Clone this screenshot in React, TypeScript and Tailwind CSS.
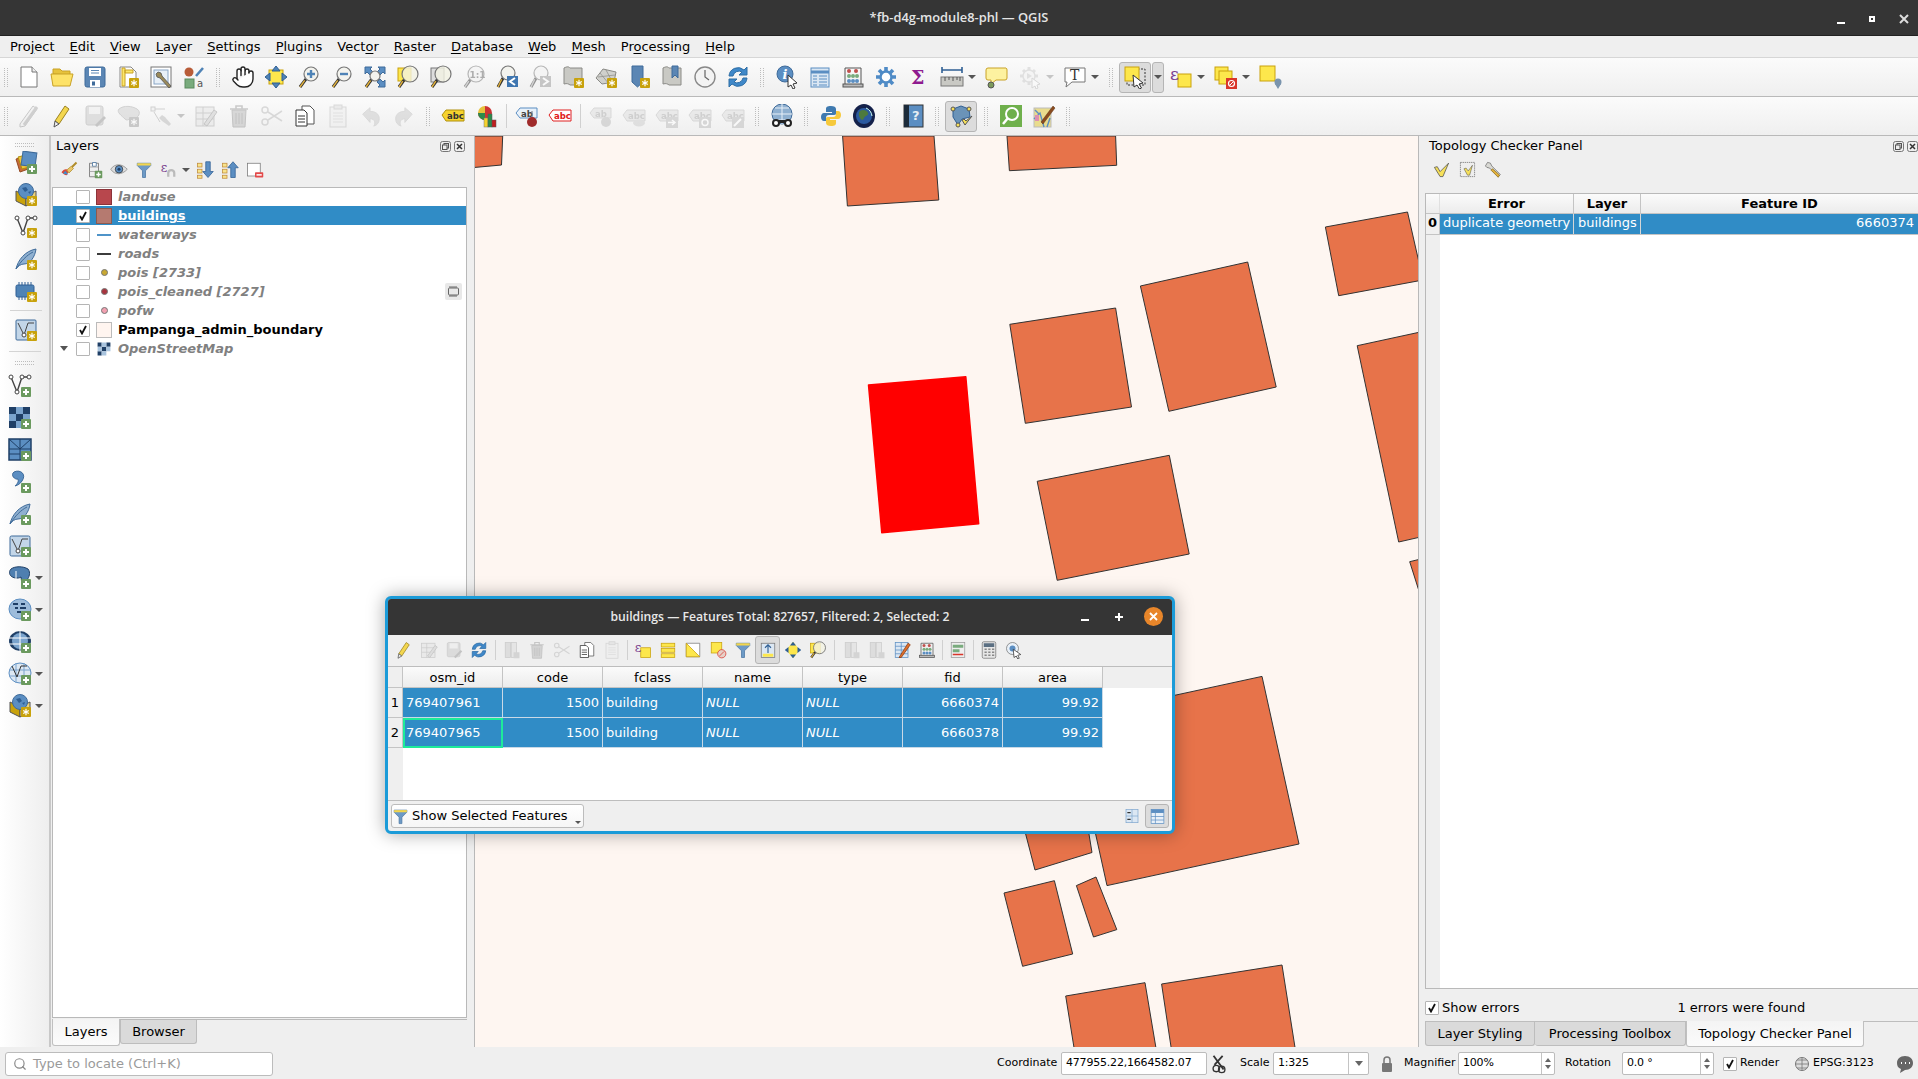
import type { ReactNode } from "react";
import { Hand, Search } from "lucide-react";

const Plus = () => (
  <g>
    <rect x="13" y="13" width="10" height="10" rx="1" fill="#6b9a5f" />
    <path d="M18 15v6M15 18h6" stroke="#fff" strokeWidth="2" />
  </g>
);
const Star = () => (
  <g>
    <rect x="13" y="13" width="10" height="10" rx="1" fill="#c8a20c" />
    <path d="M18 14.8v6.4M15.2 16.4l5.6 3.2M15.2 19.6l5.6-3.2" stroke="#fff" strokeWidth="1.2" />
  </g>
);
const Mag = ({ cx = 14, cy = 9, r = 7, fill = "#f3f3ee" }: { cx?: number; cy?: number; r?: number; fill?: string }) => (
  <g>
    <path d={`M${cx - r * 0.7} ${cy + r * 0.7}L3 22`} stroke="#333" strokeWidth="3" />
    <path d={`M${cx - r * 0.9} ${cy + r * 0.9}L3 22`} stroke="#e3b23c" strokeWidth="1.4" />
    <circle cx={cx} cy={cy} r={r} fill={fill} stroke="#777" strokeWidth="1.2" />
  </g>
);
const Page = ({ fill = "#fff", stroke = "#777" }: { fill?: string; stroke?: string }) => (
  <path d="M4 2h11l5 5v15H4z" fill={fill} stroke={stroke} />
);
const Funnel = () => (
  <g>
    <path d="M3 3h18v3l-7 7v9h-4v-9L3 6z" fill="#6d9ac6" stroke="#4a76a3" />
    <rect x="3" y="3" width="18" height="3" fill="#f3d64e" />
  </g>
);
const Sq = ({ x, y, w = 14 }: { x: number; y: number; w?: number }) => (
  <rect x={x} y={y} width={w} height={w} fill="#fde74c" stroke="#c9a20c" />
);
const Abc = ({ fill, stroke, color }: { fill: string; stroke: string; color: string }) => (
  <g>
    <path d="M1 11l4-5h18v11H5z" fill={fill} stroke={stroke} />
    <text x="6" y="15" fontSize="8.5" fontWeight="700" fontFamily="DejaVu Sans" fill={color}>
      abc
    </text>
  </g>
);
const Scroll = () => <path d="M3 3c4-2 5-1 6 0h12v17H9c-1-1-3-2-6-1z" fill="#c9c9c4" stroke="#8a8a86" />;

const icons: Record<string, ReactNode> = {
  new: (<><Page /><path d="M15 2v5h5" fill="#eee" stroke="#777" /></>),
  open: (<><path d="M3 9V4h7l2 2h8v4z" fill="#e6c23c" stroke="#c9a227" /><path d="M1 9h22l-3 12H3z" fill="#fde268" stroke="#c9a227" /></>),
  save: (<><rect x="2" y="2" width="20" height="20" rx="2" fill="#5b86b4" stroke="#3f6b9a" /><path d="M6 3h12v8H6z" fill="#fff" /><path d="M8 5.5h8M8 8h8" stroke="#5b86b4" /><rect x="7" y="15" width="10" height="7" fill="#fff" /><rect x="9" y="16.5" width="3" height="4" fill="#3f6b9a" /></>),
  layoutNew: (<><Page stroke="#888" /><path d="M6 3h3v18H6zM9 5h8v3H9z" fill="#fce76c" stroke="#c9a227" /><Star /></>),
  layouts: (<><rect x="2" y="2" width="20" height="20" fill="#fff" stroke="#777" /><rect x="5" y="5" width="14" height="14" fill="#e8f0f8" stroke="#89a6c6" /><path d="M9 7l3 1 1 3 9 10-2 2-9-10-3-1-1-3z" fill="#9a8a5a" stroke="#555" strokeWidth=".8" /></>),
  styles: (<><circle cx="7" cy="7" r="4.5" fill="#b85c38" /><path d="M14 11l7-8" stroke="#4f83b6" strokeWidth="2.5" /><rect x="3" y="14" width="9" height="9" fill="#79ab7d" stroke="#5a8a5e" /><text x="15" y="22" fontSize="10" fontFamily="DejaVu Sans" fill="#555">a</text></>),
  panSel: (<><rect x="5" y="5" width="14" height="14" fill="#fde74c" stroke="#c9a20c" /><path d="M12 1l4 5h-8zM12 23l4-5H8zM1 12l5-4v8zM23 12l-5-4v8z" fill="#4f83b6" stroke="#2f5f94" /></>),
  zoomIn: (<><Mag /><path d="M14 5v8M10 9h8" stroke="#4f83b6" strokeWidth="2.4" /></>),
  zoomOut: (<><Mag /><path d="M10 9h8" stroke="#4f83b6" strokeWidth="2.4" /></>),
  zoomFull: (<><path d="M2 2h7L7 4l3 3-3 3-3-3-2 2zM22 2v7l-2-2-3 3-3-3 3-3-2-2zM22 22h-7l2-2-3-3 3-3 3 3 2-2z" fill="#5b8ec2" stroke="#3f6b9a" /><Mag cx={12} cy={11} r={5} /></>),
  zoomSel: (<><Sq x={2} y={3} w={13} /><Mag cx={14} cy={9} r={8} fill="#f3f3e4cc" /></>),
  zoomLayer: (<><rect x="2" y="3" width="13" height="14" fill="#ddd" stroke="#777" /><Mag cx={14} cy={9} r={8} fill="#f3f3e4cc" /></>),
  zoomNative: (<><Mag cx={14} cy={9} r={8} /><text x="7.5" y="13" fontSize="9" fontWeight="700" fontFamily="DejaVu Sans" fill="#666">1:1</text></>),
  zoomLast: (<><Mag cx={13} cy={8} r={7} /><rect x="12" y="11" width="11" height="11" fill="#3f76b0" /><path d="M20 13l-5 3.5 5 3.5" stroke="#fff" strokeWidth="2" fill="none" /></>),
  zoomNext: (<><Mag cx={13} cy={8} r={7} /><rect x="12" y="11" width="11" height="11" fill="#999" /><path d="M15 13l5 3.5-5 3.5" stroke="#fff" strokeWidth="2" fill="none" /></>),
  newView: (<><Scroll /><Star /></>),
  new3d: (<><path d="M2 13l7-9 13 3-2 10-12 2z" fill="#d0d0cc" stroke="#8a8a86" /><path d="M6 8l9 11M12 5l7 13M4 12l17-2" stroke="#8a8a86" strokeWidth=".7" /><Star /></>),
  bookNew: (<><path d="M5 1h11v16l-5.500 5L5 17z" fill="#5b86b4" stroke="#3f6b9a" /><Star /></>),
  books: (<><Scroll /><path d="M12 1h6v12l-3-3-3 3z" fill="#5b86b4" stroke="#3f6b9a" /></>),
  clock: (<><circle cx="12" cy="12" r="10" fill="#f3f3f3" stroke="#888" strokeWidth="1.4" /><path d="M12 5v7l4 3" stroke="#666" strokeWidth="1.2" fill="none" /></>),
  refresh: (<><path d="M3 11a9 9 0 0 1 15-6l3-3v8h-8l3-3a6 6 0 0 0-9 4z" fill="#3f88c9" stroke="#2f6ea5" /><path d="M21 13a9 9 0 0 1-15 6l-3 3v-8h8l-3 3a6 6 0 0 0 9-4z" fill="#3f88c9" stroke="#2f6ea5" /></>),
  identify: (<><circle cx="10" cy="9" r="8" fill="#5b8ec2" stroke="#3f6b9a" /><text x="7.500" y="14" fontSize="13" fontWeight="700" fontStyle="italic" fontFamily="DejaVu Serif" fill="#fff">i</text><path d="M13 10l9 8-4 1 2 4-2 1-2-4-3 2z" fill="#fff" stroke="#333" /></>),
  table: (<><rect x="3" y="3" width="18" height="19" fill="#dbe7f3" stroke="#5b8ec2" /><path d="M3 7h18" stroke="#5b8ec2" strokeWidth="3" /><path d="M5 11h4M11 11h8M5 14h4M11 14h8M5 17h4M11 17h8M5 20h4M11 20h8" stroke="#5b8ec2" /></>),
  abacus: (<><path d="M4 3h16M4 20h16M4 3v17M20 3v17" stroke="#555" fill="none" /><rect x="2" y="19" width="20" height="3" fill="#bbb" stroke="#555" /><circle cx="8" cy="6" r="2" fill="#c0504d" /><circle cx="15" cy="6" r="2" fill="#c0504d" /><circle cx="8" cy="11" r="2" fill="#79ab7d" /><circle cx="12" cy="11" r="2" fill="#79ab7d" /><circle cx="16" cy="11" r="2" fill="#79ab7d" /><circle cx="8" cy="16" r="2" fill="#5b8ec2" /><circle cx="12" cy="16" r="2" fill="#5b8ec2" /><circle cx="16" cy="16" r="2" fill="#5b8ec2" /></>),
  gear: (<><path d="M12 2v4M12 18v4M2 12h4M18 12h4M5 5l3 3M16 16l3 3M19 5l-3 3M8 16l-3 3" stroke="#4f8bc6" strokeWidth="3.6" /><circle cx="12" cy="12" r="5.500" fill="#fff" stroke="#4f8bc6" strokeWidth="2.500" /></>),
  sigma: <text x="4" y="19" fontSize="19" fontWeight="700" fontFamily="DejaVu Serif" fill="#8e1a8e">Σ</text>,
  measure: (<><path d="M2 5h20M2 2v6M22 2v6" stroke="#2f5f94" strokeWidth="1.6" /><rect x="1" y="12" width="22" height="9" fill="#c9c9c4" stroke="#777" /><path d="M5 12v4M9 12v3M13 12v4M17 12v3M20 12v4" stroke="#555" /></>),
  note: (<><path d="M3 3h18a2 2 0 0 1 1 2v8a2 2 0 0 1-2 2h-9l-5 4v-4H3a2 2 0 0 1-2-2V5a2 2 0 0 1 2-2z" fill="#fdf2a0" stroke="#c9a227" /><circle cx="6" cy="20" r="3" fill="#7c9a5b" stroke="#555" /></>),
  gearCur: (<><path d="M11 2v4M11 16v4M2 11h4M16 11h4M5 5l3 3M14 14l3 3M17 5l-3 3M8 14l-3 3" stroke="#ccc" strokeWidth="3" /><circle cx="11" cy="11" r="6" fill="#f4f4f4" stroke="#ccc" strokeWidth="1.5" /><path d="M9 8l5 3-5 3z" fill="#ccc" /><path d="M14 13l8 6-3 1 1 3-2 1-1-3-3 2z" fill="#fff" stroke="#bbb" /></>),
  textNote: (<><path d="M2 3h20v14H9l-6 5 1-5H2z" fill="#fff" stroke="#777" /><text x="7" y="15" fontSize="14" fontFamily="DejaVu Serif" fill="#333">T</text></>),
  selectRect: (<><rect x="4" y="4" width="18" height="16" fill="none" stroke="#333" strokeDasharray="2 1.500" /><Sq x={2} y={2} w={14} /><path d="M10 10l10 8-4 1 2.500 4-2 1-2.500-4-3 2z" fill="#fff" stroke="#333" /></>),
  eps: (<><Sq x={9} y={9} w={13} /><text x="1" y="15" fontSize="17" fontFamily="DejaVu Serif" fill="#7a3f8e">ε</text></>),
  selAll: (<><Sq x={1} y={2} w={13} /><Sq x={5} y={6} w={13} /><rect x="12" y="13" width="11" height="11" fill="#d9362b" /><circle cx="17.500" cy="18.500" r="3" fill="none" stroke="#fff" strokeWidth="1.2" /><path d="M15.500 20.500l4-4" stroke="#fff" /></>),
  selLoc: (<><Sq x={1} y={1} w={15} /><circle cx="19" cy="17" r="3.500" fill="#7a94ad" /><path d="M16 19l3 5 3-5" fill="#7a94ad" /></>),
  editPen: (<><path d="M3 20L16 2l4 3L8 22l-5 1z" fill="#eee" stroke="#999" /><path d="M7 21L20 3" stroke="#aaa" strokeWidth="3" /></>),
  pencil: (<><path d="M5 17L15 2l4 3L9 20z" fill="#f3d64e" stroke="#9c8320" /><path d="M5 17l4 3-5 3z" fill="#eee" stroke="#555" /></>),
  saveEdit: (<><rect x="3" y="2" width="17" height="19" rx="2" fill="#c9c9c4" stroke="#aaa" /><rect x="6" y="3" width="11" height="7" fill="#eee" /><path d="M12 21l9-9 2 2-9 9z" fill="#999" /></>),
  addPoly: (<><path d="M3 5c5-4 13-3 18 0s1 10-3 9-6 4-9 1-9-7-6-10z" fill="#cfcfca" stroke="#aaa" /><Star /></>),
  vert: (<><rect x="2" y="3" width="4" height="4" fill="#eee" stroke="#aaa" /><path d="M6 5h10M5 8l6 10" stroke="#aaa" /><path d="M10 14l3 3 7 5 2-2-6-7-3-2z" fill="#bbb" /></>),
  editAttr: (<><rect x="2" y="3" width="18" height="19" fill="#e8e6d8" stroke="#aaa" /><path d="M2 9h18M2 15h18M9 3v19" stroke="#aaa" /><path d="M10 20l10-14 3 2-10 14z" fill="#ccc" stroke="#999" /></>),
  trash: (<><path d="M3 5h18M9 5V2h6v3" stroke="#b09a96" strokeWidth="1.600" fill="none" /><path d="M5 6h14l-1 17H6z" fill="#c9b5b1" stroke="#a58e8a" /><path d="M9 9v11M12 9v11M15 9v11" stroke="#a58e8a" /></>),
  cut: (<><circle cx="5" cy="6" r="3" fill="none" stroke="#bbb" strokeWidth="1.500" /><circle cx="5" cy="18" r="3" fill="none" stroke="#bbb" strokeWidth="1.500" /><path d="M8 8l14 9M8 16l14-9" stroke="#bbb" strokeWidth="1.500" /></>),
  copy: (<><path d="M9 2h8l4 4v14H9z" fill="#fff" stroke="#555" /><path d="M3 6h8l3 3v13H3z" fill="#fff" stroke="#333" /><path d="M5 12h7M5 15h7M5 18h7" stroke="#333" /></>),
  paste: (<><rect x="4" y="3" width="16" height="20" fill="#eee" stroke="#bbb" /><rect x="8" y="1" width="8" height="4" fill="#ddd" stroke="#bbb" /><path d="M7 9h10M7 12h10M7 15h10M7 18h10" stroke="#ccc" /></>),
  undo: <path d="M3 10l8-7v4c6 0 10 3 10 8 0 4-2 7-6 8 2-2 2-8-4-8v4z" fill="#c9c9c4" stroke="#bbb" transform="scale(.92) translate(1 1)" />,
  redo: <path d="M21 10l-8-7v4C7 7 3 10 3 15c0 4 2 7 6 8-2-2-2-8 4-8v4z" fill="#c9c9c4" stroke="#bbb" transform="scale(.92) translate(1 1)" />,
  abcY: <Abc fill="#f6d32d" stroke="#b0900c" color="#333" />,
  chart: (<><path d="M11 2a7 7 0 1 1-7 7z" fill="#c33" /><path d="M11 9L4 9a7 7 0 0 1 7-7z" fill="#e6c23c" /><path d="M4 9a7 7 0 0 0 7 7v-7z" fill="#2c8a4b" /><rect x="10" y="14" width="4" height="9" fill="#f6d32d" stroke="#777" strokeWidth=".5" /><rect x="14" y="10" width="4" height="13" fill="#2c8a4b" stroke="#555" strokeWidth=".5" /><rect x="18" y="16" width="4" height="7" fill="#c01f1f" stroke="#555" strokeWidth=".5" /></>),
  abcPin: (<><path d="M1 9l4-5h17v10H5z" fill="#e8f1fa" stroke="#5b8ec2" /><text x="6" y="13" fontSize="8.500" fontWeight="700" fontFamily="DejaVu Sans" fill="#444">ab</text><path d="M17 7v7" stroke="#777" /><circle cx="17" cy="18" r="5" fill="#a02b2b" /></>),
  abcR: <Abc fill="#fff" stroke="#e02020" color="#e02020" />,
  abcPinD: (<><path d="M1 9l4-5h17v10H5z" fill="#ddd" stroke="#bbb" /><text x="6" y="13" fontSize="8.500" fontWeight="700" fontFamily="DejaVu Sans" fill="#aaa">ab</text><circle cx="17" cy="18" r="5" fill="#bbb" /></>),
  abcEye: (<><Abc fill="#ddd" stroke="#bbb" color="#aaa" /><ellipse cx="17" cy="19" rx="6" ry="3.500" fill="#ccc" /></>),
  abcMove: (<><Abc fill="#ddd" stroke="#bbb" color="#aaa" /><rect x="11" y="13" width="12" height="11" fill="#bbb" /><path d="M13 18.500h6M17 16l3 2.500-3 2.500" stroke="#fff" fill="none" strokeWidth="1.500" /></>),
  abcRot: (<><Abc fill="#ddd" stroke="#bbb" color="#aaa" /><rect x="11" y="13" width="12" height="11" fill="#bbb" /><circle cx="17" cy="18.500" r="3" fill="none" stroke="#fff" strokeWidth="1.500" /></>),
  abcEdit: (<><Abc fill="#ddd" stroke="#bbb" color="#aaa" /><rect x="11" y="13" width="12" height="11" fill="#bbb" /><path d="M13 22l7-7" stroke="#fff" strokeWidth="2" /></>),
  metasearch: (<><circle cx="12" cy="10" r="10" fill="#8fb0d0" stroke="#3f6b9a" /><path d="M2 10h20M12 0v20M5 4h14M5 16h14" stroke="#e8f0f8" /><circle cx="6" cy="19" r="4" fill="#222" /><circle cx="18" cy="19" r="4" fill="#222" /><circle cx="6" cy="19" r="2" fill="#fff" /><circle cx="18" cy="19" r="2" fill="#fff" /><rect x="8" y="16" width="8" height="3" fill="#222" /></>),
  python: (<><path d="M12 2c-4 0-5 1-5 3v3h6v1H5c-2 0-3 2-3 4s1 4 3 4h2v-3c0-2 1-3 3-3h5c2 0 2-1 2-2V5c0-2-2-3-5-3z" fill="#3f7ab0" /><path d="M12 22c4 0 5-1 5-3v-3h-6v-1h8c2 0 3-2 3-4s-1-4-3-4h-2v3c0 2-1 3-3 3h-5c-2 0-2 1-2 2v4c0 2 2 3 5 3z" fill="#f6c93c" /></>),
  earth: (<><ellipse cx="12" cy="12" rx="11" ry="12" fill="#14214a" /><circle cx="12" cy="12" r="8" fill="#2b5aa0" /><path d="M8 7c3-2 7-1 8 2s-3 2-4 5-3 2-4 0-2-5 0-7z" fill="#4d7a3e" /><path d="M14 4a10 10 0 0 1 6 8" stroke="#cfe" strokeWidth="1" fill="none" /></>),
  help: (<><rect x="3" y="1" width="19" height="22" fill="#5b8ec2" stroke="#333" /><rect x="3" y="1" width="5" height="22" fill="#1c2b3a" /><text x="11" y="16" fontSize="13" fontWeight="700" fontFamily="DejaVu Sans" fill="#e8eef4">?</text></>),
  topo: (<><path d="M4 5l8-3 8 3 1 8-8 2-4 6-5-8z" fill="#6b93b8" stroke="#2f5f94" /><circle cx="4" cy="5" r="2" fill="#f6e05a" stroke="#555" /><circle cx="20" cy="5" r="2" fill="#f6e05a" stroke="#555" /><circle cx="9" cy="21" r="2" fill="#f6e05a" stroke="#555" /><path d="M13 16l3 5 7-9-6 5-2-2z" fill="#f6e05a" stroke="#555" /></>),
  quickSearch: (<><rect x="1" y="1" width="22" height="22" fill="#6fb04c" /><circle cx="13" cy="10" r="6" fill="none" stroke="#fff" strokeWidth="2" /><path d="M9 14l-5 6" stroke="#fff" strokeWidth="2.500" /></>),
  mapEdit: (<><rect x="2" y="4" width="17" height="19" fill="#e9dc8d" stroke="#bbb" /><path d="M2 15l6-6 4 14M3 6l4 4M15 23l3-9" stroke="#5b8ec2" strokeWidth="1.400" fill="none" /><rect x="3" y="11" width="4" height="6" fill="#dd8fb0" /><path d="M9 18L21 2l2 2-12 16z" fill="#8a4b1f" stroke="#5a3010" strokeWidth=".5" /></>),
  addLayers: (<><path d="M2 8l12-3 3 12L6 21z" fill="#c76b3a" stroke="#954a22" /><path d="M4 6l12-3 3 12L8 18z" fill="#f0c33c" stroke="#b0900c" /><rect x="8" y="1" width="14" height="14" fill="#5b8ec2" stroke="#3f6b9a" transform="rotate(8 15 8)" /><Plus /></>),
  box3d: (<><path d="M2 8l10 5v10L2 18z" fill="#c8a20c" stroke="#555" /><path d="M12 13l10-5v10l-10 5z" fill="#ecd27a" stroke="#555" /><circle cx="12" cy="8" r="7.500" fill="#5b8ec2" stroke="#3f6b9a" /><path d="M8 5l4-1 2 3-3 2zM14 9l3-1-1 3z" fill="#2f5f94" /><Star /></>),
  vLineS: (<><path d="M3 3l6 15 5-15h7" fill="none" stroke="#444" strokeWidth="1.400" /><circle cx="3" cy="3" r="2" fill="#fff" stroke="#444" /><circle cx="9" cy="18" r="2" fill="#fff" stroke="#444" /><circle cx="14" cy="3" r="2" fill="#fff" stroke="#444" /><circle cx="21" cy="3" r="2" fill="#fff" stroke="#444" /><Star /></>),
  featherS: (<><path d="M2 22c2-9 9-18 20-20-1 8-6 15-12 15-3 0-6 2-8 5z" fill="#8fb0d0" stroke="#3f6b9a" /><path d="M2 22C7 14 13 8 19 5" stroke="#3f6b9a" fill="none" /><Star /></>),
  featherP: (<><path d="M2 22c2-9 9-18 20-20-1 8-6 15-12 15-3 0-6 2-8 5z" fill="#8fb0d0" stroke="#3f6b9a" /><path d="M2 22C7 14 13 8 19 5" stroke="#3f6b9a" fill="none" /><Plus /></>),
  chip: (<><path d="M5 3v18M8 3v18M11 3v18M14 3v18M17 3v18" stroke="#2f5f94" /><rect x="2" y="6" width="18" height="12" rx="1.500" fill="#4f83b6" stroke="#2f5f94" /><Star /></>),
  virtS: (<><rect x="2" y="2" width="20" height="20" rx="1" fill="#c3d6e8" stroke="#3f6b9a" /><path d="M4 5l6 12 4-12 6 0" fill="none" stroke="#444" /><circle cx="10" cy="17" r="2" fill="#fff" stroke="#444" /><Star /></>),
  vAdd: (<><path d="M3 3l6 15 5-15h7" fill="none" stroke="#444" strokeWidth="1.400" /><circle cx="3" cy="3" r="2" fill="#fff" stroke="#444" /><circle cx="9" cy="18" r="2" fill="#fff" stroke="#444" /><circle cx="14" cy="3" r="2" fill="#fff" stroke="#444" /><circle cx="21" cy="3" r="2" fill="#fff" stroke="#444" /><Plus /></>),
  raster: (<><path d="M1 1h7v7H1zM15 1h7v7h-7zM8 8h7v7H8zM1 15h7v7H1z" fill="#1f3f66" /><path d="M8 1h7v7H8zM1 8h7v7H1zM15 8h7v7h-7zM8 15h7v7H8z" fill="#7aa3cc" /><Plus /></>),
  mesh: (<><rect x="1" y="1" width="22" height="21" fill="#5b8ec2" stroke="#1f3f66" strokeWidth="1.500" /><path d="M1 11h22M12 1v21M1 1l11 10M23 1L12 11M1 16h11" stroke="#1f3f66" /><Plus /></>),
  comma: (<><path d="M6 2c6-3 13 2 8 9-2 3-4 4-7 5 2-2 4-4 3-7-3 1-8-4-4-7z" fill="#5b8ec2" stroke="#3f6b9a" /><Plus /></>),
  virtAdd: (<><rect x="2" y="2" width="20" height="20" rx="1.500" fill="#c3d6e8" stroke="#3f6b9a" /><path d="M4 5l6 12 4-12 6 0" fill="none" stroke="#444" /><circle cx="10" cy="17" r="2" fill="#fff" stroke="#444" /><Plus /></>),
  pg: (<><path d="M3 3c4-3 12-3 17 0 3 4 1 8-1 11-1 3-3 5-5 5l-1-8c-3 2-8 1-10-1S1 5 3 3z" fill="#4f7fb0" stroke="#1f3f66" /><path d="M8 5v8" stroke="#fff" /><Plus /></>),
  wms: (<><ellipse cx="12" cy="11" rx="11" ry="10" fill="#9dbcdb" stroke="#5b8ec2" /><path d="M5 6h5M13 6h4M7 10h3M12 10h6M9 14h4" stroke="#1f3f66" strokeWidth="1.800" /><Plus /></>),
  wcs: (<><ellipse cx="12" cy="11" rx="11" ry="10" fill="#1f3f66" /><ellipse cx="12" cy="11" rx="8" ry="8" fill="#7aa3cc" /><path d="M1 8h22M1 14h22M12 1v20" stroke="#fff" /><Plus /></>),
  wfs: (<><ellipse cx="12" cy="11" rx="11" ry="10" fill="#dde8f3" stroke="#5b8ec2" /><path d="M1 8h22M1 14h22M8 1v20M16 1v20" stroke="#7aa3cc" /><path d="M4 4l5 11 4-11 6 0" fill="none" stroke="#333" /><Plus /></>),
  brush: (<><path d="M2 15c3-5 7-5 10-2l-3 6c-3 0-5-2-7-4z" fill="#d9483b" /><path d="M4 17l3-4 4 5z" fill="#3f8ec9" /><path d="M9 12l6-5 3 3-6 6z" fill="#e9c66a" stroke="#b08c2a" /><path d="M16 8l6-6" stroke="#b08c2a" strokeWidth="2.500" /></>),
  addGroup: (<><path d="M6 3h12v18H6z" fill="#eee" stroke="#666" /><path d="M10 2h5v5h-5z" fill="#fff" stroke="#3f6b9a" /><path d="M6 8h12M6 14h12" stroke="#999" /><Plus /></>),
  eye: (<><path d="M1 11c5-8 15-8 22 0-7 8-17 8-22 0z" fill="#ddd" stroke="#888" /><circle cx="12" cy="11" r="5" fill="#5b8ec2" stroke="#333" /><circle cx="12" cy="11" r="2" fill="#1f3f66" /></>),
  funnel: <Funnel />,
  epsGrey: (<><text x="1" y="15" fontSize="17" fontFamily="DejaVu Serif" fill="#7a3f8e">ε</text><path d="M11 21v-5a4 4 0 0 1 8 0v5" stroke="#bbb" strokeWidth="3" fill="none" /></>),
  expand: (<><rect x="2" y="3" width="6" height="5" fill="#f8e38a" stroke="#c08a3a" /><rect x="2" y="11" width="6" height="5" fill="#f8e38a" stroke="#c08a3a" /><rect x="2" y="19" width="6" height="4" fill="#f8e38a" stroke="#c08a3a" /><path d="M13 1h6v13h4l-7 8-7-8h4z" fill="#5b8ec2" stroke="#2f5f94" /></>),
  collapse: (<><rect x="2" y="3" width="6" height="5" fill="#f8e38a" stroke="#c08a3a" /><rect x="2" y="11" width="6" height="5" fill="#f8e38a" stroke="#c08a3a" /><rect x="2" y="19" width="6" height="4" fill="#f8e38a" stroke="#c08a3a" /><path d="M13 22h6V9h4l-7-8-7 8h4z" fill="#5b8ec2" stroke="#2f5f94" /></>),
  remove: (<><rect x="2" y="3" width="17" height="17" fill="#fff" stroke="#777" /><rect x="12" y="15" width="11" height="7" rx="1" fill="#e34a4a" /><path d="M14 18.500h7" stroke="#fff" strokeWidth="2" /></>),
  check: <path d="M2 9l4-1 4 7L22 3l-8 19H10z" fill="#f6e05a" stroke="#444" />,
  checkBox: (<><rect x="2" y="2" width="20" height="20" fill="#eee" stroke="#666" strokeDasharray="2 1" /><path d="M7 11l3-1 3 4 6-8-4 14h-3z" fill="#f6e05a" stroke="#444" strokeWidth=".7" /></>),
  wrench: (<><path d="M2 7l3-5 4 1 2 4 12 12-3 3L8 10 4 9z" fill="#d9d9d4" stroke="#666" /><path d="M12 11l10 9-2 3L10 13z" fill="#e3b23c" stroke="#8a6a1a" /></>),
  rows: (<><rect x="3" y="3" width="18" height="5" fill="#fde74c" stroke="#c9a20c" /><rect x="3" y="10" width="18" height="5" fill="#fde74c" stroke="#c9a20c" /><rect x="3" y="17" width="18" height="5" fill="#fde74c" stroke="#c9a20c" /></>),
  invert: (<><path d="M3 3h18v18H3z" fill="#fff" stroke="#777" /><path d="M3 3v18h18z" fill="#fde74c" stroke="#c9a20c" /></>),
  deselect: (<><Sq x={3} y={2} w={14} /><circle cx="17" cy="17" r="5.500" fill="#e6d0c8" stroke="#d9362b" /><path d="M14 20l6-6" stroke="#d9362b" /></>),
  moveTop: (<><rect x="3" y="3" width="18" height="19" fill="#dbe7f3" stroke="#777" /><path d="M12 5v11M8 9l4-4 4 4" stroke="#2f5f94" strokeWidth="1.500" fill="none" /><rect x="5" y="17" width="14" height="4" fill="#fde74c" /></>),
  panSmall: (<><path d="M12 1l9 11-9 11-9-11z" fill="#fde74c" /><path d="M12 1l4 5H8zM12 23l4-5H8zM1 12l5-4v8zM23 12l-5-4v8z" fill="#2f5f94" /></>),
  rowsDim: (<><rect x="3" y="2" width="7" height="20" fill="#ccc" stroke="#aaa" /><rect x="11" y="2" width="7" height="20" fill="#ddd" stroke="#aaa" /><rect x="14" y="15" width="8" height="8" fill="#bbb" /></>),
  editCol: (<><rect x="3" y="2" width="17" height="20" fill="#dbe7f3" stroke="#5b8ec2" /><path d="M3 7h17M3 12h17M3 17h17M11 2v20" stroke="#5b8ec2" /><path d="M8 22L20 3l3 2-12 17z" fill="#e0702c" stroke="#8a3a10" /></>),
  cond: (<><rect x="3" y="2" width="18" height="20" fill="#eee" stroke="#999" /><rect x="5" y="5" width="14" height="4" fill="#79ab7d" /><rect x="5" y="11" width="9" height="4" fill="#79ab7d" /><path d="M5 18h14" stroke="#d9362b" strokeWidth="2" /></>),
  calc: (<><rect x="3" y="1" width="18" height="22" rx="2" fill="#e6e6e6" stroke="#777" /><rect x="5" y="3" width="14" height="5" fill="#5b6f82" /><path d="M6 11h3M11 11h3M16 11h3M6 15h3M11 15h3M16 15h3M6 19h3M11 19h3M16 19h3" stroke="#888" strokeWidth="2" /></>),
  actions: (<><circle cx="10" cy="10" r="8" fill="#e8f0f8" stroke="#777" /><circle cx="10" cy="10" r="4" fill="#5b8ec2" /><path d="M11 11l10 7-4 1 2 4-2 1-2-4-3 2z" fill="#fff" stroke="#333" /></>),
  formView: (<><rect x="3" y="2" width="18" height="20" fill="#dbe7f3" stroke="#7aa3cc" /><path d="M12 2v20M3 12h18" stroke="#7aa3cc" /><path d="M5 7h5M5 17h5" stroke="#333" strokeWidth="2" /></>),
  tableView: (<><rect x="3" y="2" width="18" height="20" fill="#e8f0f8" stroke="#5b8ec2" /><rect x="3" y="2" width="18" height="5" fill="#5b8ec2" /><path d="M3 12h18M3 17h18M9 7v15" stroke="#5b8ec2" /></>),
  hand: <Hand x="0" y="0" width="24" height="24" fill="#fff" stroke="#222" strokeWidth="1.400" />,
  raster2: (<><path d="M1 1h7v7H1zM16 1h7v7h-7zM8 8h8v8H8zM1 16h7v7H1z" fill="#1f3f66" /><path d="M8 1h8v7H8zM1 8h7v8H1zM16 8h7v8h-7zM8 16h8v7H8z" fill="#a9c4de" /></>),
};

const Icon = ({ name, size = 24, dim = false }: { name: string; size?: number; dim?: boolean }) => (
  <svg width={size} height={size} viewBox="0 0 24 24" className={dim ? "opacity-50 grayscale shrink-0" : "shrink-0"}>
    {icons[name]}
  </svg>
);

const Handle = ({ first = false }: { first?: boolean }) => (
  <div className={`${first ? "w-[12px]" : "w-[16px]"} h-full flex items-center justify-center shrink-0`}>
    <div className="w-[4px] h-[19px] border-x border-dotted border-[#bdbdbd]" />
  </div>
);
const Arrow = ({ w = "w-[12px]" }: { w?: string }) => (
  <div className={`${w} flex items-center shrink-0`}>
    <div className="border-x-[4px] border-t-[4px] border-x-transparent border-t-[#555]" />
  </div>
);

// short codes for toolbar rows: "|" handle, "v" arrow, "s" separator, "~" prefix greys the icon, "!" prefix is a pressed button
const Row = ({ items }: { items: string[] }) => (
  <div className="flex items-center h-[39px] bg-linear-to-b from-[#fbfbfb] to-[#efefef] border-b border-[#b9b9b9] shrink-0">
    <Handle first />
    {items.map((it, i) => {
      if (it === "|") return <Handle key={i} />;
      if (it === "v") return <Arrow key={i} />;
      if (it === "s") return <div key={i} className="w-[8px] flex justify-center shrink-0"><div className="w-px h-[24px] bg-[#d0d0d0]" /></div>;
      if (it === "dv") return <Arrow key={i} w="w-[12px] opacity-30" />;
      if (it === "drop")
        return (
          <div key={i} className="w-[12px] h-[31px] flex items-center justify-center bg-[#dcdcdc] border border-[#b5b5b5] rounded-[3px] shrink-0">
            <div className="border-x-[4px] border-t-[4px] border-x-transparent border-t-[#555]" />
          </div>
        );
      if (it[0] === "!")
        return (
          <div key={i} className="w-[32px] h-[31px] flex items-center justify-center bg-[#dcdcdc] border border-[#b5b5b5] rounded-[3px] mr-px shrink-0">
            <Icon name={it.slice(1)} />
          </div>
        );
      const dim = it[0] === "~";
      return (
        <div key={i} className="w-[33px] flex justify-center shrink-0">
          <Icon name={dim ? it.slice(1) : it} dim={dim} />
        </div>
      );
    })}
  </div>
);

const menus: [string, string, string][] = [
  ["Pro", "j", "ect"],
  ["", "E", "dit"],
  ["", "V", "iew"],
  ["", "L", "ayer"],
  ["", "S", "ettings"],
  ["", "P", "lugins"],
  ["Vect", "o", "r"],
  ["", "R", "aster"],
  ["", "D", "atabase"],
  ["", "W", "eb"],
  ["", "M", "esh"],
  ["Pr", "o", "cessing"],
  ["", "H", "elp"],
];

const layers = [
  { name: "landuse", swatch: "poly", color: "#b8474d", border: "#8c3339" },
  { name: "buildings", swatch: "poly", color: "#b57a70", border: "#8c5a50", checked: true, selected: true },
  { name: "waterways", swatch: "line", color: "#4f94c9" },
  { name: "roads", swatch: "line", color: "#3c3c3c" },
  { name: "pois [2733]", swatch: "dot", color: "#c8a832" },
  { name: "pois_cleaned [2727]", swatch: "dot", color: "#a8343e", badge: true },
  { name: "pofw", swatch: "dot", color: "#f2a0b0" },
  { name: "Pampanga_admin_boundary", swatch: "poly", color: "#fff5f0", border: "#bbb", checked: true, shown: true },
  { name: "OpenStreetMap", swatch: "raster", arrow: true },
];

const Check = ({ on = false }: { on?: boolean }) => (
  <div className="w-[14px] h-[14px] bg-white border border-[#b5b5b5] rounded-[1px] flex items-center justify-center shrink-0">
    {on && (
      <svg width="10" height="10" viewBox="0 0 10 10">
        <path d="M2 5l2 3.500L8 1" fill="none" stroke="#111" strokeWidth="1.800" />
      </svg>
    )}
  </div>
);

const polys = [
  "474,136 502.700,136 501.500,165 474,167.500",
  "842.600,136 934,136 938.800,200 847.400,206",
  "1007,136 1115.600,136 1116.700,165.300 1009.400,170.700",
  "1325.400,227 1407.500,212 1423,280 1338.700,295.700",
  "1009.800,324.300 1115.600,308 1131.500,407 1025.300,423.300",
  "1140.400,286 1247.700,262 1276.200,387 1168.900,411.300",
  "1037.200,481.300 1169.300,455.300 1189.200,554 1057.200,580.300",
  "1357.200,345.700 1425,331 1425,536 1398.700,542",
  "1409.700,561.700 1425,558 1425,610",
  "1070,718 1262,676.400 1299,844 1107,885.600",
  "1022,820 1085,810 1092,852.500 1035,870",
  "1004,893 1054.400,880.700 1072.700,954 1022.600,966.300",
  "1076.400,885.600 1096,877 1116.800,929.600 1093.500,937",
  "1065.700,996 1145,982.700 1158,1060 1076,1060",
  "1161.600,984 1282,965 1297,1060 1173,1060",
];

const columns = ["osm_id", "code", "fclass", "name", "type", "fid", "area"];
const rows = [
  ["769407961", "1500", "building", "NULL", "NULL", "6660374", "99.92"],
  ["769407965", "1500", "building", "NULL", "NULL", "6660378", "99.92"],
];

const Spin = () => (
  <div className="w-[13px] h-full border-l border-[#c4c4c4] flex flex-col items-center justify-center gap-[3px] shrink-0">
    <div className="border-x-[3.500px] border-b-[4px] border-x-transparent border-b-[#666]" />
    <div className="border-x-[3.500px] border-t-[4px] border-x-transparent border-t-[#666]" />
  </div>
);

const Field = ({ text, w, spin, drop }: { text: string; w: string; spin?: boolean; drop?: boolean }) => (
  <div className={`${w} h-[23px] bg-white border border-[#bcbcbc] rounded-[2px] flex items-center shrink-0`}>
    <span className="pl-[4px] flex-1 whitespace-nowrap tracking-[-0.2px]">{text}</span>
    {spin && <Spin />}
    {drop && (
      <div className="w-[20px] h-full border-l border-[#c4c4c4] flex items-center justify-center">
        <div className="border-x-[4px] border-t-[5px] border-x-transparent border-t-[#666]" />
      </div>
    )}
  </div>
);

const DockButtons = () => (
  <div className="flex gap-[3px]">
    <svg width="11" height="11" viewBox="0 0 11 11"><rect x=".5" y=".5" width="10" height="10" rx="2" fill="#eee" stroke="#777" /><rect x="4" y="2.500" width="4.500" height="4.500" fill="none" stroke="#555" /><rect x="2.500" y="4" width="4.500" height="4.500" fill="#eee" stroke="#555" /></svg>
    <svg width="11" height="11" viewBox="0 0 11 11"><rect x=".5" y=".5" width="10" height="10" rx="2" fill="#eee" stroke="#777" /><path d="M3 3l5 5M8 3L3 8" stroke="#333" strokeWidth="1.500" /></svg>
  </div>
);

export default function App() {
  return (
    <div className="relative w-[1918px] h-[1079px] overflow-hidden flex flex-col bg-[#efefef] text-[13px] text-black font-['DejaVu_Sans',sans-serif]">
      {/* title bar */}
      <div className="h-[36px] bg-[#353535] border-b border-[#222] flex items-center justify-center relative shrink-0">
        <span className="text-[12.850px] font-semibold text-[#e4e4e4] font-['Open_Sans',sans-serif]">*fb-d4g-module8-phl — QGIS</span>
        <div className="absolute right-[9px] top-[14px] flex items-center gap-[24px]">
          <div className="w-[8px] h-[2px] mt-[8px] bg-white" />
          <div className="w-[6px] h-[6px] border-2 border-white" />
          <svg width="10" height="10" viewBox="0 0 10 10"><path d="M1 1l8 8M9 1L1 9" stroke="#ddd" strokeWidth="2" /></svg>
        </div>
      </div>
      {/* menu */}
      <div className="h-[22px] flex items-center gap-[15.100px] pl-[10px] border-b border-[#d6d6d6] shrink-0">
        {menus.map(([a, u, b]) => (
          <span key={a + u + b} className="whitespace-nowrap">
            {a}
            <u className="underline-offset-2">{u}</u>
            {b}
          </span>
        ))}
      </div>
      <Row
        items={[
          "new", "open", "save", "layoutNew", "layouts", "styles", "|",
          "hand", "panSel", "zoomIn", "zoomOut", "zoomFull", "zoomSel", "zoomLayer", "~zoomNative", "zoomLast", "~zoomNext", "newView", "new3d", "bookNew", "books", "clock", "refresh", "|",
          "identify", "table", "abacus", "gear", "sigma", "measure", "v", "note", "~gearCur", "dv", "textNote", "v", "|",
          "!selectRect", "drop", "eps", "v", "selAll", "v", "selLoc",
        ]}
      />
      <Row
        items={[
          "~editPen", "pencil", "~saveEdit", "~addPoly", "~vert", "dv", "~editAttr", "~trash", "~cut", "copy", "~paste", "~undo", "~redo", "|",
          "abcY", "chart", "s", "abcPin", "abcR", "s", "~abcPinD", "~abcEye", "~abcMove", "~abcRot", "~abcEdit", "|",
          "metasearch", "|", "python", "earth", "|", "help", "|", "!topo", "|", "quickSearch", "mapEdit", "|",
        ]}
      />

      {/* main area */}
      <div className="flex flex-1 min-h-0">
        {/* left toolbar */}
        <div className="w-[51px] border-r-2 border-[#c8c8c8] bg-linear-to-r from-white to-[#eeeeee] flex flex-col shrink-0">
          <div className="h-[11px] flex items-end justify-center"><div className="w-[19px] h-[4px] border-y border-dotted border-[#bdbdbd]" /></div>
          {["addLayers", "box3d", "vLineS", "featherS", "chip"].map((n) => (
            <div key={n} className="h-[32px] flex items-center pl-[14px]"><Icon name={n} /></div>
          ))}
          <div className="h-[7px] flex items-center"><div className="w-[32px] ml-[10px] h-px bg-[#d4d4d4]" /></div>
          <div className="h-[32px] flex items-center pl-[14px]"><Icon name="virtS" /></div>
          <div className="h-[24px] flex flex-col items-center justify-around">
            <div className="w-[32px] h-px bg-[#d4d4d4]" />
            <div className="w-[19px] h-[4px] border-y border-dotted border-[#bdbdbd]" />
          </div>
          {[["vAdd"], ["raster"], ["mesh"], ["comma"], ["featherP"], ["virtAdd"], ["pg", "v"], ["wms", "v"], ["wcs"], ["wfs", "v"], ["box3d", "v"]].map(([n, v], i) => (
            <div key={i} className="h-[32px] flex items-center pl-[8px]">
              <Icon name={n} />
              {v && <div className="ml-[3px] border-x-[4px] border-t-[4px] border-x-transparent border-t-[#555]" />}
            </div>
          ))}
        </div>

        {/* layers dock */}
        <div className="w-[423px] flex flex-col pl-[1px] pr-[7px] shrink-0">
          <div className="h-[21px] flex items-center justify-between pl-[4px] pr-[2px] pb-[1px]">
            <span>Layers</span>
            <DockButtons />
          </div>
          <div className="h-[30px] flex items-center pl-[4px] pb-[4px]">
            {["brush", "addGroup", "eye", "funnel", "epsGrey"].map((n) => (
              <div key={n} className="w-[25px] flex justify-center"><Icon name={n} size={18} /></div>
            ))}
            <div className="border-x-[4px] border-t-[4px] border-x-transparent border-t-[#555] ml-[1px] mr-[2px]" />
            {["expand", "collapse", "remove"].map((n) => (
              <div key={n} className="w-[25px] flex justify-center"><Icon name={n} size={18} /></div>
            ))}
          </div>
          <div className="flex-1 bg-white border border-[#b9b9b9] min-h-0">
            <div className="-mt-px">
              {layers.map((l) => (
                <div key={l.name} className={`h-[19px] flex items-center relative ${l.selected ? "bg-[#308cc6]" : ""}`}>
                  <div className="w-[23px] flex justify-center">
                    {l.arrow && <div className="ml-[-2px] border-x-[4px] border-t-[5px] border-x-transparent border-t-[#555]" />}
                  </div>
                  <Check on={l.checked} />
                  <div className="w-[16px] h-[16px] ml-[6px] mr-[6px] flex items-center justify-center shrink-0">
                    {l.swatch === "poly" && <div className="w-[16px] h-[16px] border" style={{ background: l.color, borderColor: l.border }} />}
                    {l.swatch === "line" && <div className="w-[14px] h-[2px]" style={{ background: l.color }} />}
                    {l.swatch === "dot" && <div className="w-[7px] h-[7px] rounded-full border border-[#777]" style={{ background: l.color }} />}
                    {l.swatch === "raster" && <Icon name="raster2" size={14} />}
                  </div>
                  <span
                    className={`font-bold whitespace-nowrap ${
                      l.selected ? "text-white underline" : l.shown ? "text-black" : "italic text-[#808080]"
                    }`}
                  >
                    {l.name}
                  </span>
                  {l.badge && (
                    <div className="absolute right-[4px] top-[1px] w-[17px] h-[17px] bg-[#e8e8e8] rounded-[2px] flex items-center justify-center">
                      <svg width="13" height="11" viewBox="0 0 13 11"><rect x="1.500" y="2" width="10" height="7" rx="1" fill="none" stroke="#666" /><path d="M3 0v2M5 0v2M7 0v2M9 0v2M3 9v2M5 9v2M7 9v2M9 9v2" stroke="#666" /></svg>
                    </div>
                  )}
                </div>
              ))}
            </div>
          </div>
          <div className="h-[28px] flex border-t border-[#b9b9b9] shrink-0 mt-[1px]">
            <div className="w-[68px] h-[27px] -mt-[1px] bg-linear-to-b from-[#f4f4f4] to-[#fbfbfb] border-x border-b border-[#c0c0c0] rounded-b-[3px] flex items-center justify-center">Layers</div>
            <div className="w-[77px] h-[24px] bg-[#dadada] border-x border-b border-[#bdbdbd] rounded-b-[3px] flex items-center justify-center">Browser</div>
          </div>
        </div>

        {/* map */}
        <div className="w-[945px] border-x border-[#b9b9b9] bg-[#fef6f1] shrink-0 overflow-hidden">
          <svg width="943" height="911" viewBox="475 136 943 911" className="block">
            {polys.map((p) => (
              <polygon key={p} points={p} fill="#e7734a" stroke="#333" strokeWidth="1" />
            ))}
            <polygon points="868.500,385 965.800,376.700 978.700,523.700 881.800,532.700" fill="#ff0000" stroke="#ff0000" strokeWidth="1.500" strokeLinejoin="round" />
          </svg>
        </div>

        {/* topology dock */}
        <div className="flex-1 min-w-0 flex flex-col pl-[6px]">
          <div className="h-[21px] flex items-center justify-between pl-[4px] pb-[1px]">
            <span>Topology Checker Panel</span>
            <div><DockButtons /></div>
          </div>
          <div className="h-[36px] flex items-center pl-[4px] pb-[12px]">
            {["check", "checkBox", "wrench"].map((n) => (
              <div key={n} className="w-[25.500px] flex justify-center"><Icon name={n} size={17} /></div>
            ))}
          </div>
          <div className="flex-1 min-h-0 flex flex-col bg-white border-y border-l border-[#b9b9b9]">
            <div className="flex h-[20px] bg-linear-to-b from-[#fbfbfb] to-[#ececec] border-b border-[#c4c4c4] font-bold shrink-0">
              <div className="w-[14px] border-r border-[#e0e0e0]" />
              <div className="w-[134px] border-r border-[#c4c4c4] text-center">Error</div>
              <div className="w-[67px] border-r border-[#c4c4c4] text-center">Layer</div>
              <div className="flex-1 text-center">Feature ID</div>
            </div>
            <div className="flex h-[21px] shrink-0 leading-[18px]">
              <div className="w-[14px] bg-[#f0f0f0] border-r border-b border-[#c4c4c4] text-center font-bold">0</div>
              <div className="flex-1 flex bg-[#308cc6] text-white border-b border-[#c4c4c4]">
                <div className="w-[134px] border-r border-[#d6d6d6] pl-[3px] whitespace-nowrap">duplicate geometry</div>
                <div className="w-[67px] border-r border-[#d6d6d6] pl-[4px]">buildings</div>
                <div className="flex-1 text-right pr-[4px]">6660374</div>
              </div>
            </div>
            <div className="flex-1 flex"><div className="w-[14px] bg-[#efefef]" /></div>
          </div>
          <div className="h-[32px] flex items-center shrink-0 pt-[5px]">
            <Check on />
            <span className="ml-[3px]">Show errors</span>
            <span className="ml-[158px]">1 errors were found</span>
          </div>
          <div className="h-[26px] flex items-start border-t border-[#bdbdbd] shrink-0">
            <div className="w-[110px] h-[24px] bg-[#dadada] border-x border-b border-[#bdbdbd] rounded-b-[3px] flex items-center justify-center">Layer Styling</div>
            <div className="w-[151px] h-[24px] bg-[#dadada] border-r border-b border-[#bdbdbd] rounded-b-[3px] flex items-center justify-center">Processing Toolbox</div>
            <div className="w-[178px] h-[26px] -mt-px bg-linear-to-b from-[#f4f4f4] to-[#fbfbfb] border-x border-b border-[#c0c0c0] rounded-b-[3px] flex items-center justify-center">Topology Checker Panel</div>
          </div>
        </div>
      </div>

      {/* status bar */}
      <div className="h-[32px] flex items-center shrink-0 text-[11px] pt-[1px]">
        <div className="ml-[5px] w-[268px] h-[24px] bg-white border border-[#bcbcbc] rounded-[3px] flex items-center text-[13px] text-[#9a9a9a] shrink-0">
          <Search size={14} className="ml-[7px] mr-[6px] text-[#888]" />
          Type to locate (Ctrl+K)
        </div>
        <div className="flex-1" />
        <span className="w-[64px] shrink-0">Coordinate</span>
        <Field text="477955.22,1664582.07" w="w-[146px]" />
        <div className="w-[33px] flex pl-[4px] shrink-0">
          <svg width="16" height="20" viewBox="0 0 16 22"><path d="M2 2l11 15M12 2L3 12" stroke="#333" strokeWidth="2" /><circle cx="5" cy="16" r="3.500" fill="none" stroke="#333" strokeWidth="1.500" /><circle cx="11" cy="17" r="3.500" fill="none" stroke="#333" strokeWidth="1.500" /></svg>
        </div>
        <span className="w-[33px] shrink-0">Scale</span>
        <Field text="1:325" w="w-[96px]" drop />
        <div className="w-[35px] flex justify-center shrink-0">
          <svg width="12" height="18" viewBox="0 0 12 18"><path d="M3 8V5a3 3 0 0 1 6 0v3" stroke="#777" strokeWidth="1.500" fill="none" /><rect x="1" y="8" width="10" height="9" rx="1" fill="#777" /></svg>
        </div>
        <span className="w-[54px] shrink-0">Magnifier</span>
        <Field text="100%" w="w-[97px]" spin />
        <span className="w-[67px] pl-[10px] shrink-0">Rotation</span>
        <Field text="0.0 °" w="w-[92px]" spin />
        <div className="w-[9px] shrink-0" />
        <Check on />
        <span className="w-[57px] pl-[3px] shrink-0">Render</span>
        <div className="w-[19px] shrink-0">
          <svg width="16" height="16" viewBox="0 0 16 16"><circle cx="8" cy="8" r="6.500" fill="#ddd" stroke="#777" /><path d="M1.500 8h13M8 1.500v13M3 4h10M3 12h10" stroke="#777" strokeWidth=".8" /></svg>
        </div>
        <span className="w-[62px] shrink-0">EPSG:3123</span>
        <div className="w-[43px] flex justify-end pr-[4px] shrink-0">
          <svg width="18" height="18" viewBox="0 0 18 18"><path d="M9 1c5 0 8 3 8 7s-3 7-8 7l-5 3 1-4C2 13 1 11 1 8c0-4 3-7 8-7z" fill="#666" /><path d="M5 8h1M9 8h1M13 8h1" stroke="#fff" strokeWidth="2" /></svg>
        </div>
      </div>

      {/* attribute table window */}
      <div className="absolute left-[385px] top-[596px] w-[790px] h-[238px] border-[3px] border-[#1b9bd8] rounded-[6px] bg-[#efefef] flex flex-col overflow-hidden shadow-[0_0_18px_rgba(0,0,0,0.35)]">
        <div className="h-[36px] bg-[#353535] relative flex items-center justify-center shrink-0">
          <span className="text-[12.200px] font-semibold text-[#e8e8e8] whitespace-nowrap font-['Open_Sans',sans-serif]">buildings — Features Total: 827657, Filtered: 2, Selected: 2</span>
          <div className="absolute left-[693px] top-[20px] w-[8px] h-[2px] bg-white" />
          <svg width="10" height="10" viewBox="0 0 10 10" className="absolute left-[726px] top-[13px]"><path d="M5 1v8M1 5h8" stroke="#fff" strokeWidth="2" /></svg>
          <div className="absolute left-[756px] top-[8px] w-[19px] h-[19px] rounded-full bg-[#e8862a] flex items-center justify-center">
            <svg width="9" height="9" viewBox="0 0 9 9"><path d="M1 1l7 7M8 1L1 8" stroke="#fff" strokeWidth="1.800" /></svg>
          </div>
        </div>
        <div className="h-[32px] flex items-center pl-[3px] pb-[2px] border-b border-[#bdbdbd] shrink-0">
          {[
            "pencil", "~editAttr", "~saveEdit", "refresh", "s8",
            "~rowsDim", "~trash", "~cut", "copy", "~paste", "s6",
            "eps", "rows", "invert", "deselect", "funnel", "!moveTop", "panSmall", "zoomSel", "s9",
            "~rowsDim", "~rowsDim", "editCol", "abacus", "s6",
            "cond", "s6",
            "calc", "actions",
          ].map((n, i) => {
            if (n[0] === "s" && n.length === 2) {
              return (
                <div key={i} className={`${n === "s8" ? "w-[8px]" : n === "s9" ? "w-[9px]" : "w-[6px]"} flex justify-center shrink-0`}>
                  <div className="w-px h-[20px] bg-[#d0d0d0]" />
                </div>
              );
            }
            if (n[0] === "!") {
              return (
                <div key={i} className="w-[25px] h-[28px] flex items-center justify-center bg-[#dcdcdc] border border-[#b5b5b5] rounded-[3px] shrink-0">
                  <Icon name={n.slice(1)} size={18} />
                </div>
              );
            }
            const dim = n[0] === "~";
            return (
              <div key={i} className="w-[25px] flex justify-center shrink-0">
                <Icon name={dim ? n.slice(1) : n} size={18} dim={dim} />
              </div>
            );
          })}
        </div>
        <div className="flex-1 min-h-0 flex flex-col bg-white border-b border-[#bdbdbd]">
          <div className="flex h-[21px] shrink-0">
            <div className="w-[15px] bg-[#efefef] border-r border-b border-[#c4c4c4]" />
            {columns.map((c) => (
              <div key={c} className="w-[100px] bg-linear-to-b from-[#fbfbfb] to-[#ececec] border-r border-b border-[#c4c4c4] text-center leading-[21px]">{c}</div>
            ))}
            <div className="flex-1 bg-[#efefef]" />
          </div>
          {rows.map((r, i) => (
            <div key={r[0]} className="flex h-[30px] shrink-0">
              <div className="w-[15px] bg-[#efefef] border-r border-b border-[#c4c4c4] text-center leading-[29px]">{i + 1}</div>
              {r.map((v, j) => (
                <div
                  key={j}
                  className={`w-[100px] bg-[#308cc6] text-white border-r border-b border-[#c9d9e6] flex items-center px-[3px] ${j === 1 || j >= 5 ? "justify-end" : ""} ${v === "NULL" ? "italic" : ""} ${i === 1 && j === 0 ? "outline-2 -outline-offset-2 outline-[#1eeb9a]" : ""}`}
                >
                  {v}
                </div>
              ))}
            </div>
          ))}
          <div className="flex-1 flex"><div className="w-[15px] bg-[#efefef]" /></div>
        </div>
        <div className="h-[30px] flex items-center pl-[3px] pr-[3px] shrink-0">
          <div className="w-[193px] h-[24px] bg-linear-to-b from-white to-[#f6f6f6] border border-[#bcbcbc] rounded-[3px] flex items-center relative">
            <Icon name="funnel" size={17} />
            <span className="ml-[3px]">Show Selected Features</span>
            <div className="absolute right-[2px] bottom-[3px] border-x-[3px] border-t-[3px] border-x-transparent border-t-[#555]" />
          </div>
          <div className="flex-1" />
          <Icon name="formView" size={16} />
          <div className="w-[24px] h-[24px] ml-[5px] bg-[#dcdcdc] border border-[#b5b5b5] rounded-[3px] flex items-center justify-center">
            <Icon name="tableView" size={17} />
          </div>
        </div>
      </div>
    </div>
  );
}
